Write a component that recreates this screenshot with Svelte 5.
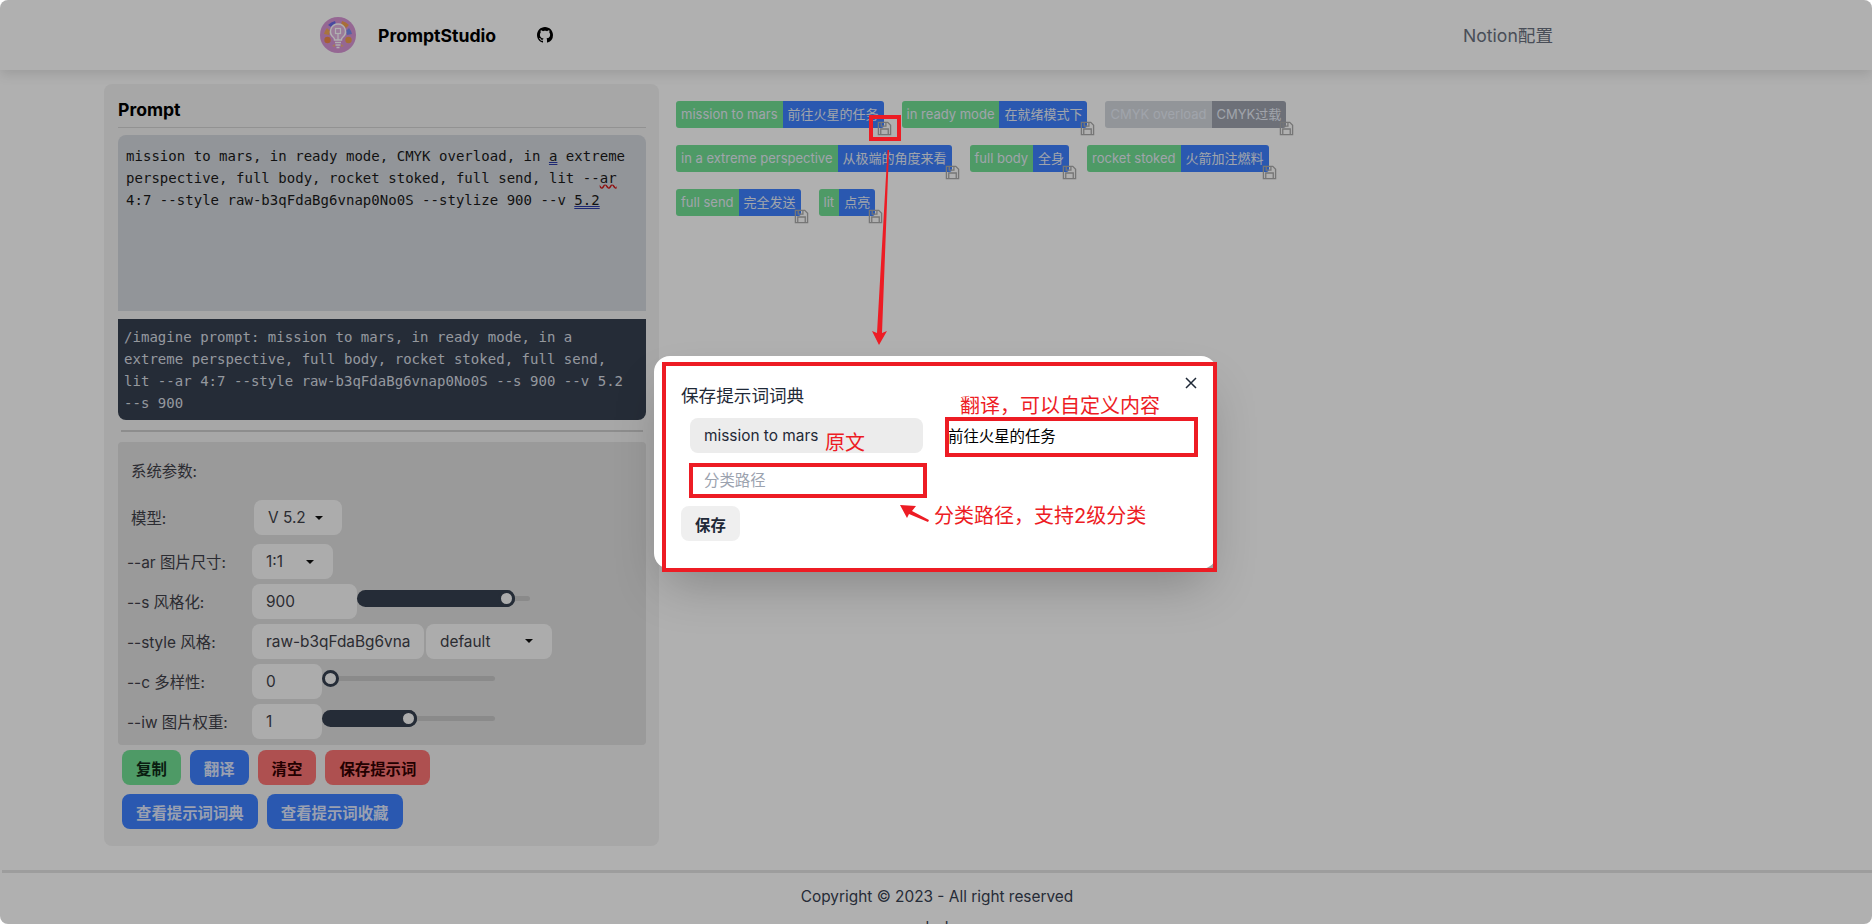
<script lang="ts">
	const tags = [
		{ en: 'mission to mars', zh: '前往火星的任务' },
		{ en: 'in ready mode', zh: '在就绪模式下' },
		{ en: 'CMYK overload', zh: 'CMYK过载', off: true },
		{ en: 'in a extreme perspective', zh: '从极端的角度来看' },
		{ en: 'full body', zh: '全身' },
		{ en: 'rocket stoked', zh: '火箭加注燃料' },
		{ en: 'full send', zh: '完全发送' },
		{ en: 'lit', zh: '点亮' }
	];
</script>

<div class="page">
	<header class="navbar">
		<svg class="logo" viewBox="0 0 36 36" aria-hidden="true">
			<circle cx="18" cy="18" r="18" fill="#d896d6" />
			<path d="M8 8a14 14 0 0 1 7-4l1 3a10 10 0 0 0-5 3z" fill="#6b6be8" />
			<path d="M22 4a14 14 0 0 1 7 4l-3 3a10 10 0 0 0-5-3z" fill="#f4a050" />
			<path d="M4 17a14 14 0 0 1 3-6l3 3-1 4z" fill="#f4a85a" />
			<path d="M29 11a14 14 0 0 1 3 6l-5 1-1-4z" fill="#7a8cf0" />
			<circle cx="7.5" cy="23" r="3.2" fill="#f08a4a" />
			<circle cx="28.5" cy="23" r="3.2" fill="#f0a050" />
			<path d="M12 29l3-2v3zM24 29l-3-2v3z" fill="#f0b080" />
			<path d="M18 7a7.5 7.5 0 0 0-4.500 13.500c.8.7 1 1.500 1 2.500h7c0-1 .2-1.800 1-2.500A7.500 7.500 0 0 0 18 7z" fill="#e2b4e0" stroke="#fff" stroke-width="1.400" />
			<path d="M15 25.500h6M15.500 28h5M16.500 30.500h3" stroke="#fff" stroke-width="1.400" />
			<rect x="15.500" y="11.500" width="5" height="5" fill="none" stroke="#fff" stroke-width="1.200" />
			<path d="M18 16.500V23" stroke="#fff" stroke-width="1.200" />
		</svg>
		<span class="brand">PromptStudio</span>
		<svg class="github" viewBox="0 0 16 16" aria-hidden="true">
			<path d="M8 0C3.58 0 0 3.58 0 8c0 3.54 2.29 6.53 5.47 7.59.4.07.55-.17.55-.38 0-.19-.01-.82-.01-1.49-2.01.37-2.53-.49-2.69-.94-.09-.23-.48-.94-.82-1.13-.28-.15-.68-.52-.01-.53.63-.01 1.08.58 1.23.82.72 1.21 1.87.87 2.33.66.07-.52.28-.87.51-1.07-1.78-.2-3.64-.89-3.64-3.95 0-.87.31-1.59.82-2.15-.08-.2-.36-1.02.08-2.12 0 0 .67-.21 2.2.82.64-.18 1.32-.27 2-.27s1.36.09 2 .27c1.53-1.04 2.2-.82 2.2-.82.44 1.1.16 1.92.08 2.12.51.56.82 1.27.82 2.15 0 3.07-1.87 3.75-3.65 3.95.29.25.54.73.54 1.48 0 1.07-.01 1.93-.01 2.2 0 .21.15.46.55.38A8.01 8.01 0 0 0 16 8c0-4.42-3.58-8-8-8z" />
		</svg>
		<span class="notion">Notion配置</span>
	</header>

	<main class="content">
		<section class="card">
			<h2>Prompt</h2>
			<div class="prompt-input">
				mission to mars, in ready mode, CMYK overload, in <span class="grammar">a</span> extreme
				perspective, full body, rocket stoked, full send, lit --<span class="spell">ar</span>
				4:7 --style raw-b3qFdaBg6vnap0No0S --stylize 900 --v <span class="grammar">5.2</span>
			</div>
			<div class="prompt-output">
				/imagine prompt: mission to mars, in ready mode, in a
				extreme perspective, full body, rocket stoked, full send,
				lit --ar 4:7 --style raw-b3qFdaBg6vnap0No0S --s 900 --v 5.2
				--s 900
			</div>
			<hr />

			<div class="params">
				<div class="row heading">系统参数:</div>
				<div class="row model">
					<span class="label">模型:</span>
					<div class="select w-model">V 5.2<i class="caret"></i></div>
				</div>
				<div class="row">
					<span class="label">--ar 图片尺寸:</span>
					<div class="select w-ar">1:1<i class="caret"></i></div>
				</div>
				<div class="row">
					<span class="label">--s 风格化:</span>
					<input class="field w-s" value="900" readonly />
					<div class="range">
						<div class="fill" style="width: 158px"></div>
						<div class="thumb" style="left: 141px"></div>
					</div>
				</div>
				<div class="row">
					<span class="label">--style 风格:</span>
					<input class="field w-style" value="raw-b3qFdaBg6vna" readonly />
					<div class="select w-default">default<i class="caret"></i></div>
				</div>
				<div class="row">
					<span class="label">--c 多样性:</span>
					<input class="field w-small" value="0" readonly />
					<div class="range">
						<div class="thumb" style="left: 0"></div>
					</div>
				</div>
				<div class="row">
					<span class="label">--iw 图片权重:</span>
					<input class="field w-small" value="1" readonly />
					<div class="range">
						<div class="fill" style="width: 95px"></div>
						<div class="thumb" style="left: 78px"></div>
					</div>
				</div>
			</div>

			<div class="actions">
				<button class="btn green">复制</button>
				<button class="btn blue">翻译</button>
				<button class="btn red">清空</button>
				<button class="btn red">保存提示词</button>
			</div>
			<div class="actions">
				<button class="btn blue">查看提示词词典</button>
				<button class="btn blue">查看提示词收藏</button>
			</div>
		</section>

		<section class="tags">
			{#each tags as tag}
				<div class="tag" class:off={tag.off}>
					<span class="en">{tag.en}</span><span class="zh">{tag.zh}</span>
					<svg class="save" viewBox="0 0 16 16" aria-hidden="true">
						<path d="M1.500 1.500h10l3 3v10h-13z M4.500 1.500v4h5v-4 M4 14.500v-6h8v6" />
					</svg>
				</div>
			{/each}
		</section>
	</main>

	<footer class="footer">
		<p>Copyright © 2023 - All right reserved</p>
		<p class="links">l l</p>
	</footer>

	<div class="backdrop"></div>

	<div class="modal">
		<button class="close" aria-label="关闭">
			<svg viewBox="0 0 12 12"><path d="M1 1l10 10M11 1L1 11" /></svg>
		</button>
		<h3>保存提示词词典</h3>
		<div class="modal-grid">
			<input class="modal-field gray" value="mission to mars" readonly />
			<input class="modal-field plain" value="前往火星的任务" readonly />
			<input class="modal-field path" placeholder="分类路径" readonly />
		</div>
		<button class="btn-save">保存</button>
	</div>

	<!-- red annotations pasted on top of the screenshot -->
	<div class="mark mark-icon"></div>
	<div class="mark mark-modal"></div>
	<div class="mark mark-zh"></div>
	<div class="mark mark-path"></div>
	<span class="note note-zh">翻译，可以自定义内容</span>
	<span class="note note-en">原文</span>
	<span class="note note-path">分类路径，支持2级分类</span>
	<svg class="arrows" viewBox="0 0 1872 924" aria-hidden="true">
		<path d="M887.500 150L877 333 872 331 879 345 887 331 882 333 889 150z" fill="#ed1c24" />
		<path d="M900 505L916 506 912 511 929 520 928 522 909 514 907 518z" fill="#ed1c24" />
	</svg>
</div>

<style>
	:global(body) {
		margin: 0;
		background: #fff;
	}

	.page {
		position: relative;
		height: 924px;
		overflow: hidden;
		font-family: Inter, 'Noto Sans CJK SC', sans-serif;
		font-size: 15.4px;
		color: #1f2937;
		background: #fff;
	}

	.navbar {
		display: flex;
		align-items: center;
		height: 70px;
		box-sizing: border-box;
		padding: 0 319px 0 320px;
		box-shadow: 0 4px 12px rgba(0, 0, 0, 0.12);
	}

	.logo {
		width: 36px;
		height: 36px;
		margin-right: 22px;
	}

	.brand {
		font-size: 17.6px;
		font-weight: 700;
		color: #000;
	}

	.github {
		width: 16px;
		height: 16px;
		margin-left: 41px;
		fill: #000;
	}

	.notion {
		margin-left: auto;
		margin-bottom: 2px;
		font-size: 17.6px;
		color: #6b7280;
	}

	.content {
		display: flex;
		gap: 17px;
		padding: 14px 0 0 104px;
	}

	.card {
		width: 555px;
		height: 762px;
		box-sizing: border-box;
		padding: 0 13px 0 14px;
		background: #f2f2f2;
		border-radius: 8px;
	}

	h2 {
		margin: 0;
		height: 44px;
		box-sizing: border-box;
		padding-top: 15px;
		font-size: 17.6px;
		line-height: 22px;
		font-weight: 700;
		color: #000;
		border-bottom: 1px solid #d4d4d4;
	}

	.prompt-input,
	.prompt-output {
		font-family: 'DejaVu Sans Mono', monospace;
		font-size: 14px;
		line-height: 22px;
		letter-spacing: 0.03px;
		white-space: pre-line;
	}

	.prompt-input {
		height: 176px;
		box-sizing: border-box;
		margin-top: 7px;
		padding: 10px 8px;
		background: #d4d8de;
		border-radius: 8px 8px 0 0;
		color: #1a1a1a;
	}

	.grammar {
		text-decoration: underline double #2b3aa8;
	}

	.spell {
		text-decoration: underline wavy #d01818;
	}

	.prompt-output {
		height: 101px;
		box-sizing: border-box;
		margin-top: 8px;
		padding: 7px 6px;
		background: #364050;
		border-radius: 0 0 8px 8px;
		color: #d8dde4;
	}

	hr {
		margin: 10px 3px;
		height: 2px;
		border: 0;
		background: #cdcdcd;
	}

	.params {
		display: flex;
		flex-direction: column;
		gap: 5px;
		height: 303px;
		box-sizing: border-box;
		padding-left: 9px;
		background: #dfdfdf;
		border-radius: 4px;
		color: #3f4149;
	}

	.row {
		display: flex;
		align-items: center;
		height: 35px;
	}

	.heading {
		margin: 10px 0 8px 4px;
	}

	.model {
		margin-bottom: 4px;
		padding-left: 4px;
	}

	.model .label {
		width: 123px;
	}

	.label {
		width: 125px;
		margin-bottom: 2px;
		flex: none;
		white-space: nowrap;
	}

	.select,
	.field {
		display: flex;
		align-items: center;
		height: 35px;
		box-sizing: border-box;
		padding: 0 14px;
		border: 0;
		border-radius: 8px;
		background: #fafafa;
		font: inherit;
		color: #3f4149;
		flex: none;
	}

	.caret {
		margin-left: auto;
		width: 0;
		height: 0;
		border-left: 4px solid transparent;
		border-right: 4px solid transparent;
		border-top: 4px solid #111;
	}

	.w-model {
		width: 88px;
		padding-right: 19px;
	}

	.w-ar {
		width: 81px;
		padding-right: 19px;
	}

	.w-s {
		width: 105px;
	}

	.w-style {
		width: 172px;
	}

	.w-default {
		width: 126px;
		margin: -1px 0 0 2px;
		padding-right: 19px;
	}

	.w-small {
		width: 70px;
	}

	.range {
		position: relative;
		width: 173px;
		height: 5px;
		margin-bottom: 7px;
		border-radius: 3px;
		background: #c9c9c9;
		flex: none;
	}

	.fill {
		position: absolute;
		left: 0;
		top: -6px;
		height: 17px;
		border-radius: 9px;
		background: #364050;
	}

	.thumb {
		position: absolute;
		top: -6px;
		width: 17px;
		height: 17px;
		box-sizing: border-box;
		border: 3px solid #364050;
		border-radius: 50%;
		background: #fafafa;
	}

	.actions {
		display: flex;
		gap: 9px;
		margin: 5px 0 9px 4px;
	}

	.btn {
		height: 35px;
		padding: 0 14px;
		border: 0;
		border-radius: 8px;
		font: inherit;
		font-weight: 700;
		color: #111;
	}

	.green {
		background: #71df94;
		color: #0f2a18;
	}

	.blue {
		background: #3d80ff;
		color: #dfe8ff;
	}

	.red {
		background: #fc7474;
		color: #300;
	}

	.tags {
		display: flex;
		flex-wrap: wrap;
		align-content: flex-start;
		column-gap: 18px;
		row-gap: 17px;
		width: 640px;
		padding-top: 17px;
	}

	.tag {
		position: relative;
		display: flex;
		height: 27px;
		line-height: 27px;
		color: #e8eef8;
	}

	.en,
	.zh {
		padding: 0 5px;
		white-space: nowrap;
		font-size: 13px;
	}

	.en {
		background: #71df94;
		border-radius: 3px 0 0 3px;
	}

	.zh {
		background: #3d80ff;
		border-radius: 0 3px 3px 0;
	}

	.off .en {
		background: #d4d8de;
	}

	.off .zh {
		background: #9ea2ae;
	}

	.save {
		position: absolute;
		right: -8px;
		bottom: -8px;
		width: 15px;
		height: 15px;
		fill: none;
		stroke: #ababab;
		stroke-width: 1.4;
	}

	.footer {
		position: absolute;
		left: 2px;
		right: 0;
		top: 870px;
		border-top: 3px solid #e4e4e4;
		text-align: center;
		color: #374151;
	}

	.footer p {
		margin: 14px 0 0;
		line-height: 20px;
	}

	.footer .links {
		margin-top: 11px;
		word-spacing: 11px;
	}

	.backdrop {
		position: absolute;
		inset: 0;
		background: rgba(0, 0, 0, 0.31);
		border-radius: 8px;
	}

	.modal {
		position: absolute;
		left: 654px;
		top: 356px;
		width: 563px;
		height: 213px;
		box-sizing: border-box;
		padding: 28px 27px;
		background: #fff;
		border-radius: 16px;
		box-shadow: 0 25px 50px -12px rgba(0, 0, 0, 0.25);
	}

	.modal h3 {
		margin: 0;
		font-size: 17.6px;
		line-height: 24px;
		font-weight: 400;
		color: #1f2937;
	}

	.close {
		position: absolute;
		right: 20px;
		top: 21px;
		width: 12px;
		height: 12px;
		padding: 0;
		border: 0;
		background: none;
	}

	.close svg {
		display: block;
		fill: none;
		stroke: #1f2937;
		stroke-width: 1.5;
	}

	.modal-grid {
		display: grid;
		grid-template-columns: 233px 253px;
		column-gap: 22px;
		row-gap: 10px;
		margin: 10px 0 0 9px;
	}

	.modal-field {
		height: 35px;
		box-sizing: border-box;
		padding: 0 14px;
		border: 0;
		border-radius: 8px;
		background: #fff;
		font: inherit;
		color: #1f2937;
		outline: 0;
		min-width: 0;
		width: 100%;
	}

	.modal-field::placeholder {
		color: #9ca3af;
	}

	.gray {
		background: #ececec;
	}

	.plain {
		padding: 0 14px 2px 3px;
		color: #000;
	}

	.path {
		grid-column: 1;
	}

	.btn-save {
		display: block;
		margin-top: 8px;
		width: 59px;
		height: 35px;
		padding: 0;
		border: 0;
		border-radius: 8px;
		background: #efefef;
		font: inherit;
		font-weight: 700;
		color: #1f2937;
	}

	.mark {
		position: absolute;
		box-sizing: border-box;
		border: 4px solid #ed1c24;
	}

	.mark-icon {
		left: 869px;
		top: 115px;
		width: 32px;
		height: 26px;
	}

	.mark-modal {
		left: 662px;
		top: 362px;
		width: 555px;
		height: 210px;
	}

	.mark-zh {
		left: 945px;
		top: 417px;
		width: 253px;
		height: 40px;
	}

	.mark-path {
		left: 689px;
		top: 463px;
		width: 238px;
		height: 35px;
	}

	.note {
		position: absolute;
		font-size: 20px;
		line-height: 24px;
		color: #ed1c24;
		white-space: nowrap;
	}

	.note-zh {
		left: 960px;
		top: 394px;
	}

	.note-en {
		left: 825px;
		top: 431px;
	}

	.note-path {
		left: 934px;
		top: 504px;
	}

	.arrows {
		position: absolute;
		left: 0;
		top: 0;
		width: 1872px;
		height: 924px;
		pointer-events: none;
	}
</style>
